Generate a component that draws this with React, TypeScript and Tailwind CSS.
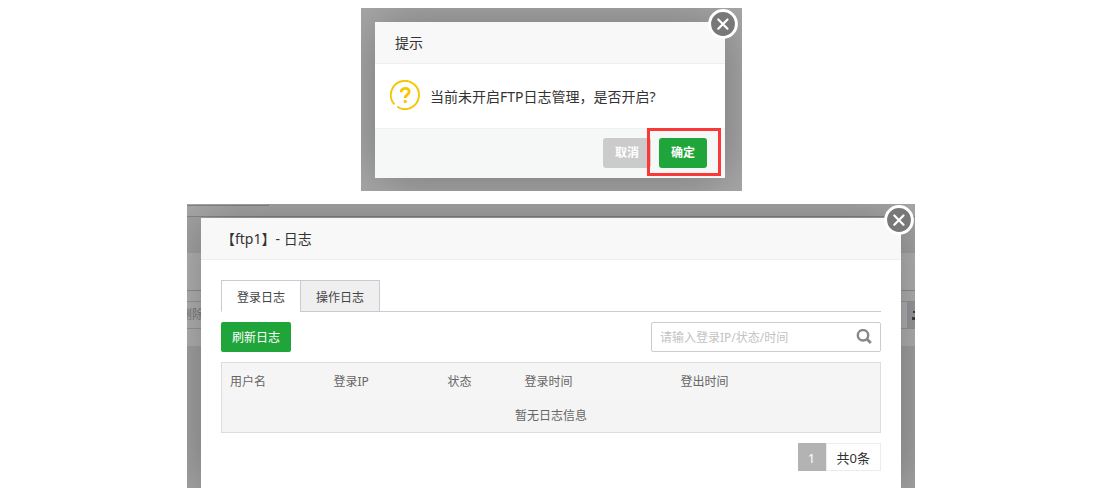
import { useState } from "react";

function CloseButton() {
  return (
    <button
      type="button"
      aria-label="关闭"
      className="absolute -top-[13px] -right-[13px] z-10 size-[30px] rounded-full"
    >
      <svg viewBox="0 0 30 30" className="size-full" aria-hidden="true">
        <circle cx="15" cy="15" r="13.4" fill="#787878" stroke="#fff" strokeWidth="3" />
        <path d="M10.3 10.5l9.2 9.2M19.5 10.5l-9.2 9.2" stroke="#fff" strokeWidth="2.2" strokeLinecap="round" />
      </svg>
    </button>
  );
}

function ConfirmDialog() {
  return (
    <section className="w-[381px] overflow-hidden bg-[#a8a8a8] pt-[14px] pr-[17px] pb-[13px] pl-[14px]">
      <div role="dialog" aria-labelledby="confirm-title" className="relative bg-white shadow-[1px_1px_50px_rgba(0,0,0,0.3)]">
        <CloseButton />
        <h2 id="confirm-title" className="h-[42px] border-b border-[#eee] bg-[#f8f8f8] px-5 text-sm leading-[41px] text-[#333]">
          提示
        </h2>
        <div className="flex h-16 items-start gap-2.5 px-[15px] pt-4">
          <svg viewBox="0 0 30 30" className="size-[30px] shrink-0" fill="none" stroke="#f7c600" aria-hidden="true">
            <path d="M4.400 24.400A14.100 14.100 0 1 1 7.200 26.800" strokeWidth="1.900" />
            <path d="M11.200 12.200c0-5 8-5 8-.6 0 3.200-4 2.900-4 6.400" strokeWidth="2.800" />
            <circle cx="15.200" cy="21.400" r="1.700" fill="#f7c600" stroke="none" />
          </svg>
          <p className="text-sm leading-[34px] text-[#333]">当前未开启FTP日志管理，是否开启?</p>
        </div>
        <div className="flex h-[50px] items-start justify-end gap-2 border-t border-[#edf1f2] bg-[#f5f8f7] pt-[9px] pr-[18px] text-xs font-bold text-white">
          <button type="button" className="h-[30px] w-12 rounded-[3px] bg-[#cbcbcb]">取消</button>
          <div className="relative">
            <button type="button" className="block h-[30px] w-12 rounded-[3px] bg-[#20a53a]">确定</button>
            <span className="pointer-events-none absolute -top-[10px] -right-[14px] -bottom-2 -left-3 border-3 border-[#fb3838]" />
          </div>
        </div>
      </div>
    </section>
  );
}

const tabs = ["登录日志", "操作日志"];

function DimmedPage() {
  return (
    <div aria-hidden="true" className="absolute inset-0 flex flex-col text-xs">
      <div className="h-[13px] border-b border-[#858585] bg-[#a8a8a8]">
        <div className="h-0.5 w-[82px] rounded-br-[2px] border-r border-b border-[#858585]" />
      </div>
      <div className="h-9 bg-[#a3a3a3]" />
      <div className="h-[38px] border-b border-[#909090] bg-[#b2b2b2]" />
      <div className="h-[10px] bg-[#b2b2b2]" />
      <div className="flex h-7 items-center justify-between overflow-hidden border-y border-[#989898] bg-[#b2b2b2] whitespace-nowrap text-[#777]">
        <span className="-ml-[7px]">删除</span>
        <svg viewBox="0 0 8 28" className="h-7 w-2 bg-[#9b9b9f]">
          <path d="M6 10h2v2H6zM5 16h3v3H5z" fill="#44403c" />
        </svg>
      </div>
      <div className="h-[17px] bg-[#b2b2b2]" />
      <div className="flex-1 bg-[#a3a3a3]" />
    </div>
  );
}

function LogDialog() {
  const [active, setActive] = useState(0);
  return (
    <section className="relative mr-px w-[728px] overflow-hidden px-[14px] pt-[14px]">
      <DimmedPage />
      <div role="dialog" aria-labelledby="log-title" className="relative bg-white shadow-[1px_1px_50px_rgba(0,0,0,0.3)]">
        <CloseButton />
        <h2 id="log-title" className="h-[42px] border-b border-[#eee] bg-[#f8f8f8] px-5 text-sm leading-[41px] text-[#333]">
          【ftp1】- 日志
        </h2>
        <div className="px-5 pt-5 pb-[17px] text-xs">
          <div role="tablist" className="flex h-8 border-b border-[#ccc9d6]">
            {tabs.map((tab, i) => (
              <button
                key={tab}
                type="button"
                role="tab"
                aria-selected={active === i}
                onClick={() => setActive(i)}
                className={
                  "h-8 w-20 border border-[#ccc9d6] pt-1 text-[#444] not-first:-ml-px " +
                  (active === i ? "border-b-white bg-white" : "bg-[#efefef]")
                }
              >
                {tab}
              </button>
            ))}
          </div>
          <div className="mt-2.5 flex justify-between">
            <button type="button" className="h-[30px] w-[70px] rounded-[2px] bg-[#20a53a] pt-0.5 text-white">刷新日志</button>
            <div className="flex h-[30px] w-[230px] items-center rounded-[2px] border border-[#ccc]">
              <input
                type="text"
                aria-label="搜索日志"
                placeholder="请输入登录IP/状态/时间"
                className="min-w-0 flex-1 pt-0.5 pl-2 text-[#555] outline-none placeholder:text-[#c3c3c3]"
              />
              <button type="button" aria-label="搜索" className="mr-2 size-4">
                <svg viewBox="0 0 16 16" className="size-4" fill="none" stroke="#888" aria-hidden="true">
                  <circle cx="7" cy="6.300" r="5.200" strokeWidth="2.400" />
                  <path d="M10.800 10l4 4" strokeWidth="2.800" />
                </svg>
              </button>
            </div>
          </div>
          <table className="mt-2.5 w-full table-fixed border border-[#ddd] bg-[#f5f5f5] text-left text-[#666]">
            <colgroup>
              <col className="w-[104px]" />
              <col className="w-[114px]" />
              <col className="w-[77px]" />
              <col className="w-[156px]" />
              <col />
            </colgroup>
            <thead>
              <tr className="h-9">
                {["用户名", "登录IP", "状态", "登录时间", "登出时间"].map((h) => (
                  <th key={h} className="px-2 pt-0.5 font-normal">{h}</th>
                ))}
              </tr>
            </thead>
            <tbody>
              <tr className="h-[34px] bg-[#f4f4f4]">
                <td colSpan={5} className="pt-0.5 text-center">暂无日志信息</td>
              </tr>
            </tbody>
          </table>
          <div className="mt-2.5 flex h-7 justify-end text-[13px]">
            <span className="w-7 bg-[#b3b3b3] text-center leading-[30px] text-white">1</span>
            <span className="border border-[#ececec] px-2.5 leading-7 text-[#333]">共0条</span>
          </div>
        </div>
      </div>
    </section>
  );
}

export default function App() {
  return (
    <main className="flex min-h-screen flex-col items-center gap-[13px] bg-white pt-2 pl-[10px] font-['Noto_Sans','Noto_Sans_CJK_SC',sans-serif]">
      <ConfirmDialog />
      <LogDialog />
    </main>
  );
}
